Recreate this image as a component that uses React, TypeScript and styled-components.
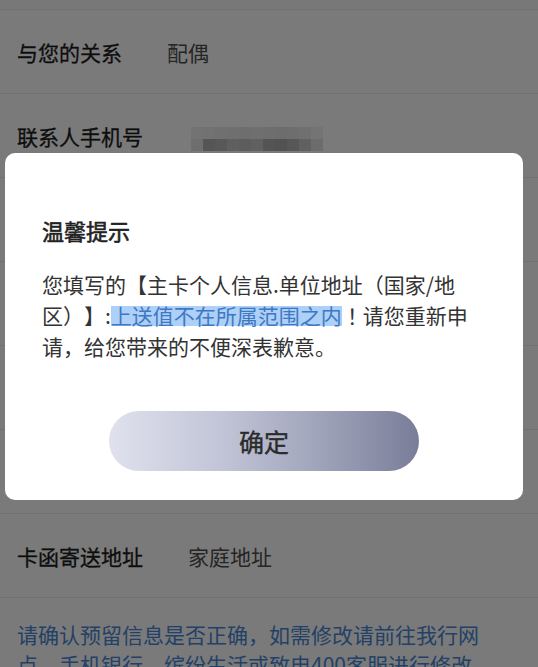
import React from "react";
import styled, { createGlobalStyle } from "styled-components";

const GlobalStyle = createGlobalStyle`
  html, body {
    margin: 0;
    padding: 0;
    background: #ffffff;
    font-family: "Noto Sans CJK SC", "Noto Sans", sans-serif;
    text-spacing-trim: space-all;
  }
  * { box-sizing: border-box; }
`;

const Page = styled.div`
  width: 100%;
  min-height: 667px;
  background: #ffffff;
  overflow: hidden;
`;

const TopEdge = styled.div`
  height: 10px;
  border-bottom: 1px solid #ececec;
  background: #fbfbfb;
`;

const Row = styled.div`
  height: 84px;
  display: flex;
  align-items: center;
  padding-left: 17px;
  border-bottom: 1px solid #ececec;
  background: #ffffff;
`;

const Label = styled.span`
  font-size: 21px;
  font-weight: 400;
  color: #1c1c1c;
  line-height: 30px;
  -webkit-text-stroke: 0.3px #1c1c1c;
`;

const Value = styled.span`
  margin-left: 45px;
  font-size: 21px;
  color: #4f4f4f;
  line-height: 30px;
`;

const Mosaic = styled.span`
  margin-left: 48px;
  display: grid;
  grid-template-columns: repeat(11, 12px);
  grid-auto-rows: 12px;
  transform: translateY(3px);
`;

const Tile = styled.span<{ $shade: string }>`
  background: ${(p) => p.$shade};
`;

const Notice = styled.div`
  padding: 21px 41px 0 17px;
  font-size: 21px;
  line-height: 30px;
  color: #4a88d6;
`;

const Overlay = styled.div`
  position: fixed;
  inset: 0;
  background: rgba(0, 0, 0, 0.52);
  padding: 153px 15px 0 5px;
`;

const Dialog = styled.div`
  background: #ffffff;
  border-radius: 10px;
  height: 347px;
  padding: 62px 51px 0 37px;
  display: flex;
  flex-direction: column;
`;

const Title = styled.div`
  font-size: 22px;
  font-weight: 400;
  line-height: 30px;
  color: #222222;
  -webkit-text-stroke: 0.6px #222222;
`;

const Body = styled.p`
  margin: 24px 0 0;
  font-size: 21px;
  line-height: 31px;
  color: #333333;
`;

const Highlight = styled.span`
  color: #3f78c2;
  background: linear-gradient(
    to bottom,
    transparent 20%,
    #add0f8 20%,
    #add0f8 86%,
    transparent 86%
  );
`;

const Bang = styled.span`
  font-family: "Noto Sans CJK TC", "Noto Sans CJK SC", sans-serif;
`;

const Actions = styled.div`
  margin-top: auto;
  padding-bottom: 29px;
  display: flex;
  justify-content: center;
  margin-right: -14px;
`;

const ConfirmButton = styled.button`
  width: 310px;
  height: 60px;
  border: none;
  border-radius: 30px;
  background: linear-gradient(90deg, #e0e1ed 0%, #c3c6d8 35%, #a3a7bd 65%, #7a7d98 100%);
  font-family: "Noto Sans CJK SC", "Noto Sans", sans-serif;
  font-size: 25px;
  font-weight: 400;
  color: #2b2b2b;
  -webkit-text-stroke: 0.4px #2b2b2b;
  cursor: pointer;
`;

const shades = [
  "#f0f0f0", "#eeeeee", "#ebebeb", "#e8e8e8", "#e6e6e6", "#e9e9e9", "#e7e7e7", "#e4e4e4", "#e7e7e7", "#ebebeb", "#f2f2f2",
  "#e6e6e6", "#b2b2b2", "#b8b8b8", "#c6c6c6", "#c2c2c2", "#c9c9c9", "#b0b0b0", "#acacac", "#b6b6b6", "#c8c8c8", "#e2e2e2",
];

const hiddenRows = [
  ["联系人姓名", "张三"],
  ["单位名称", "某某有限公司"],
  ["单位地址", "广东省深圳市"],
  ["家庭地址", "广东省深圳市"],
];

export default function App() {
  return (
    <>
      <GlobalStyle />
      <Page>
        <TopEdge />
        <Row>
          <Label>与您的关系</Label>
          <Value>配偶</Value>
        </Row>
        <Row>
          <Label>联系人手机号</Label>
          <Mosaic aria-label="已隐藏">
            {shades.map((s, i) => (
              <Tile key={i} $shade={s} />
            ))}
          </Mosaic>
        </Row>
        {hiddenRows.map(([l, v]) => (
          <Row key={l}>
            <Label>{l}</Label>
            <Value>{v}</Value>
          </Row>
        ))}
        <Row>
          <Label>卡函寄送地址</Label>
          <Value>家庭地址</Value>
        </Row>
        <Notice>
          请确认预留信息是否正确，如需修改请前往我行网点、手机银行、缤纷生活或致电400客服进行修改
        </Notice>
      </Page>
      <Overlay>
        <Dialog role="dialog">
          <Title>温馨提示</Title>
          <Body>
            您填写的【主卡个人信息.单位地址（国家/地区）】:
            <Highlight>上送值不在所属范围之内</Highlight>
            <Bang>！</Bang>请您重新申请，给您带来的不便深表歉意。
          </Body>
          <Actions>
            <ConfirmButton>确定</ConfirmButton>
          </Actions>
        </Dialog>
      </Overlay>
    </>
  );
}
